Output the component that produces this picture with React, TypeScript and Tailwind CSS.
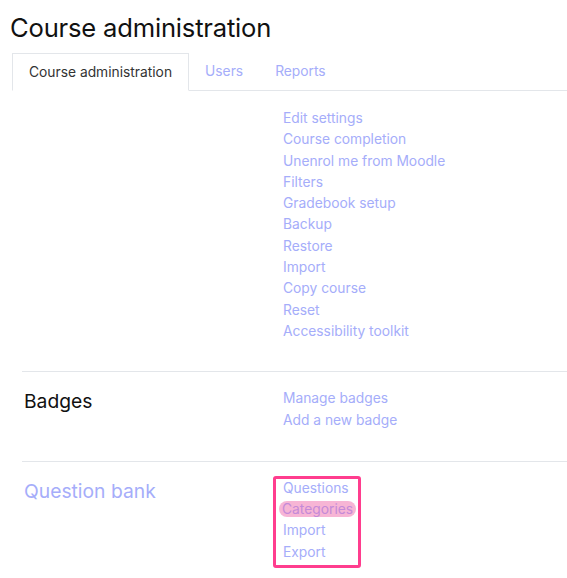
const settingsLinks = [
  "Edit settings",
  "Course completion",
  "Unenrol me from Moodle",
  "Filters",
  "Gradebook setup",
  "Backup",
  "Restore",
  "Import",
  "Copy course",
  "Reset",
  "Accessibility toolkit",
]

const badgeLinks = ["Manage badges", "Add a new badge"]

const LinkList = ({ links }: { links: string[] }) => (
  <ul className="flex flex-col">
    {links.map((l) => (
      <li key={l} className="text-[13.8px] leading-[21.3px] text-[#a5adfa]">
        {l}
      </li>
    ))}
  </ul>
)

export default function App() {
  return (
    <div className="min-h-screen bg-white font-['Inter',sans-serif] overflow-hidden">
      <div className="pl-[10px]">
        <h1 className="pt-[12px] text-[25.6px] leading-[32px] tracking-[-0.2px] text-[#111]">
          Course administration
        </h1>

        <div className="mt-[8px] ml-[2px] flex items-end border-b border-[#e3e6ea]">
          <div className="-mb-px flex h-[38px] items-center border border-[#e3e6ea] border-b-white bg-white px-[16px] text-[13.8px] text-[#333]">
            Course administration
          </div>
          <div className="flex h-[38px] items-center px-[16px] text-[13.8px] text-[#a5adfa]">Users</div>
          <div className="flex h-[38px] items-center px-[16px] text-[13.8px] text-[#a5adfa]">Reports</div>
        </div>

        <div className="ml-[12px]">
          <section className="grid grid-cols-[261px_1fr] pt-[17px] pb-[29px]">
            <div />
            <LinkList links={settingsLinks} />
          </section>

          <section className="grid grid-cols-[261px_1fr] border-t border-[#e3e6ea] pt-[16px] pb-[30px]">
            <h2 className="pl-[2px] text-[19.3px] leading-[26px] text-[#111]">Badges</h2>
            <LinkList links={badgeLinks} />
          </section>

          <section className="grid grid-cols-[261px_1fr] border-t border-[#e3e6ea] pt-[16px] pb-[20px]">
            <h2 className="pl-[2px] text-[19.3px] leading-[26px] text-[#a5adfa]">Question bank</h2>
            <div className="relative">
              <ul className="flex flex-col">
                <li className="text-[13.8px] leading-[21.3px] text-[#a5adfa]">Questions</li>
                <li className="text-[13.8px] leading-[21.3px]">
                  <span className="-ml-[4px] rounded-full bg-[#f7b5d5] px-[3px] text-[#c48ad8]">Categories</span>
                </li>
                <li className="text-[13.8px] leading-[21.3px] text-[#a5adfa]">Import</li>
                <li className="text-[13.8px] leading-[21.3px] text-[#a5adfa]">Export</li>
              </ul>
              <div className="absolute left-[-10px] top-[-2px] h-[92px] w-[88px] rounded-[3px] border-[3.5px] border-[#ff3d8e]" />
            </div>
          </section>
        </div>
      </div>
    </div>
  )
}
